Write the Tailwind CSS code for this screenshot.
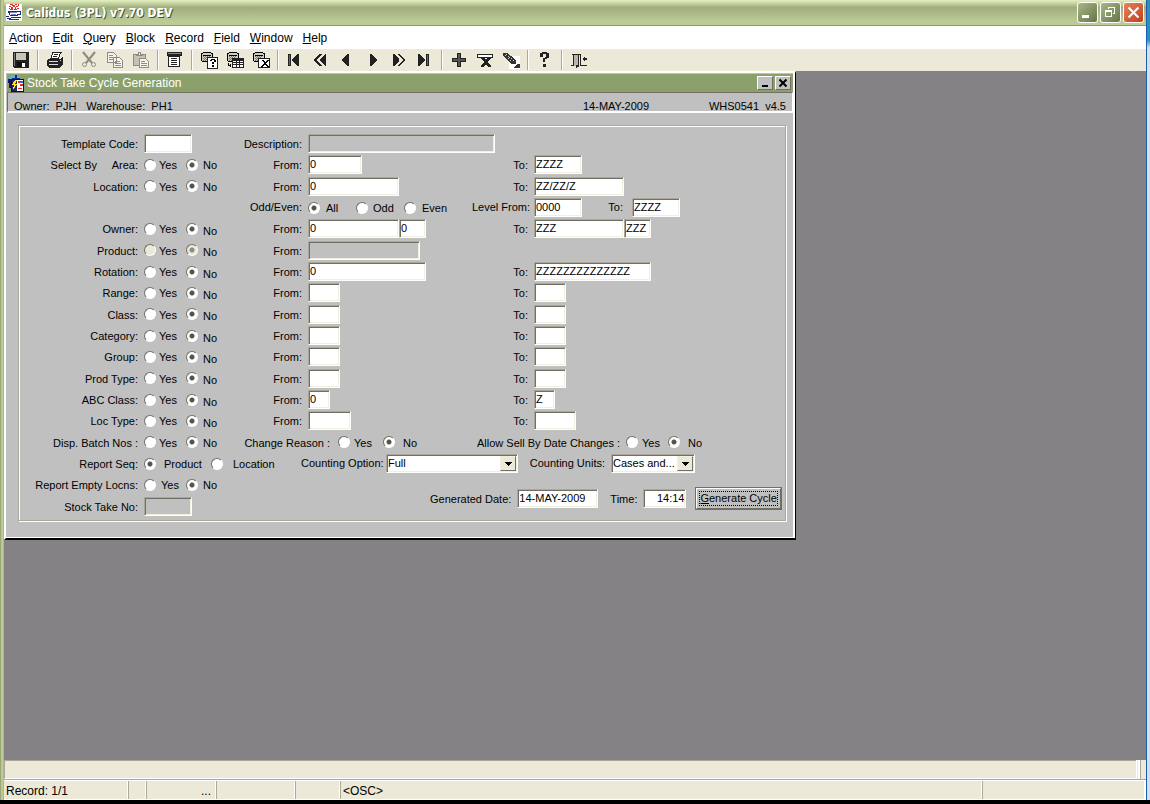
<!DOCTYPE html>
<html lang="en">
<head>
  <meta charset="UTF-8">
  <meta name="viewport" content="width=device-width, initial-scale=1.0">
  <script src="https://cdn.jsdelivr.net/npm/@tailwindcss/browser@4"></script>
  <title>Calidus (3PL) v7.70 DEV</title>
</head>
<body class="h-screen overflow-hidden flex flex-col bg-black font-['Liberation_Sans',Arial,sans-serif] text-xs text-black">

  <div class="flex flex-1 min-h-0">
    <!-- Left window edge -->
    <div class="w-1 bg-linear-to-r from-[#8b9a68] via-[#c9d5a4] to-[#a3ae80]"></div>

    <div class="flex flex-col flex-1 min-w-0">
      <!-- Title bar -->
      <header class="h-[26px] flex items-center justify-between pl-0.5 pr-0.5 bg-linear-to-b from-[#e4f0c0] from-0% via-[#a0ae7d] via-30% to-[#bccb96] to-85% border-b border-[#8a9a68]">
        <div class="flex items-center gap-1">
          <svg class="w-4 h-[17px]" viewBox="0 0 16 17" shape-rendering="crispEdges">
            <rect width="16" height="17" fill="#fff"/>
            <path d="M4 0h2v1h-2zM6 0h1v2h-1zM9 0h2v1h-2zM12 0h1v2h-1zM3 2h2v1h-2zM7 1h2v2h-2zM10 2h2v1h-2zM5 3h2v2h-2zM9 3h1v2h-1zM11 4h2v1h-2zM3 4h1v1h-1zM4 5h3v1h-3zM8 5h3v1h-3z" fill="#e22c2c"/>
            <path d="M2 7h10v1h-10zM2 8h2v1h-2zM11 7h4v1h-4zM14 8h1v3h-1zM3 9h1v2h-1zM11 10h3v1h-3zM4 11h8v1h-8zM0 12h3v1h-3zM5 13h6v1h-6zM1 14h4v1h-4zM11 13h4v1h-4zM3 15h10v1h-10z" fill="#22267c"/>
            <path d="M4 8h7v1h-7zM5 10h5v1h-5z" fill="#7d86c4"/>
          </svg>
          <h1 class="font-['DejaVu_Sans_Condensed','Open_Sans',sans-serif] text-xs font-bold text-white [text-shadow:1px_1px_0_#4a5632]">Calidus (3PL) v7.70 DEV</h1>
        </div>
        <div class="flex gap-0.5">
          <button type="button" aria-label="Minimize" class="size-[21px] rounded-[3px] border border-white bg-linear-to-br from-[#a9b787] to-[#66764a]">
            <svg viewBox="0 0 19 19" shape-rendering="crispEdges"><path d="M4 12h7v3h-7z" fill="#fff"/></svg>
          </button>
          <button type="button" aria-label="Restore" class="size-[21px] rounded-[3px] border border-white bg-linear-to-br from-[#a9b787] to-[#66764a]">
            <svg viewBox="0 0 19 19" shape-rendering="crispEdges" fill="none" stroke="#fff"><path d="M4.500 8.500h6v5h-6zM4 7.500h7M7.500 6v-1.500h6v6h-2M7 4.500h7"/></svg>
          </button>
          <button type="button" aria-label="Close" class="size-[21px] rounded-[3px] border border-white bg-linear-to-br from-[#e5835f] to-[#c23c10]">
            <svg viewBox="0 0 19 19" fill="none" stroke="#fff" stroke-width="2"><path d="M4.500 4.500l10 10M14.500 4.500l-10 10"/></svg>
          </button>
        </div>
      </header>

      <!-- Menu -->
      <nav class="h-[23px] flex items-center gap-2.5 px-[5px] bg-white">
        <a href="#"><u>A</u>ction</a>
        <a href="#"><u>E</u>dit</a>
        <a href="#"><u>Q</u>uery</a>
        <a href="#"><u>B</u>lock</a>
        <a href="#"><u>R</u>ecord</a>
        <a href="#"><u>F</u>ield</a>
        <a href="#"><u>W</u>indow</a>
        <a href="#"><u>H</u>elp</a>
      </nav>

      <!-- Toolbar, filled in below -->
      <div id="toolbar" class="h-[22px] flex items-start pl-1 bg-[#ece9d8]"></div>

      <!-- Workspace -->
      <main class="flex-1 min-h-0 bg-[#848284]">
        <section class="w-[792px] max-w-full border-t-2 border-l-2 border-white border-r border-r-black border-b-2 border-b-black bg-[#c0c0c0] text-[11px] leading-[13px]">
          <div class="border-r-2 border-b border-white pb-4">
            <div class="pt-px pl-px">
              <div class="h-[18px] flex items-center justify-between pr-0.5 bg-[#8ca06b] text-white">
                <div class="flex items-center gap-0.5 text-xs leading-4">
                  <svg class="size-[18px]" viewBox="0 0 18 18" shape-rendering="crispEdges">
                    <circle cx="8" cy="6" r="5" fill="#102c9c"/>
                    <path d="M4 1h4v3h-3v2h-2v-3zM10 2h3v2h-3z" fill="#5bb5c9"/>
                    <path d="M1 5h3v9h-2v-5h-1z" fill="#14146e"/>
                    <path d="M4 5h13v13h-13z" fill="#111"/>
                    <path d="M5 6h11v11h-11z" fill="#fff"/>
                    <path d="M5 6h5v11h-5z" fill="#2a2a58"/>
                    <path d="M8 6h2l-2 4h2l-4 6 1-5h-2z" fill="#ffe41c"/>
                    <path d="M11 7h2v2h-2zM13 10h3v2h-3zM11 14h4v1h-4z" fill="#e22"/>
                    <path d="M13 7h3v2h-3z" fill="#36c"/>
                  </svg>
                  <h2>Stock Take Cycle Generation</h2>
                </div>
                <div class="flex gap-0.5">
                  <button type="button" aria-label="Minimize form" class="w-4 h-[14px] bg-[#c0c0c0] border border-white border-r-[#716f64] border-b-[#716f64]">
                    <svg viewBox="0 0 14 12" shape-rendering="crispEdges"><path d="M4 8h6v2h-6z"/></svg>
                  </button>
                  <button type="button" aria-label="Close form" class="w-4 h-[14px] bg-[#c0c0c0] border border-white border-r-[#716f64] border-b-[#716f64]">
                    <svg viewBox="0 0 14 12" fill="none" stroke="#000" stroke-width="2"><path d="M3.500 2.500l7 7M10.500 2.500l-7 7"/></svg>
                  </button>
                </div>
              </div>
              <div class="h-[21px] flex items-end justify-between px-1.5 leading-[10px] border-t border-l border-[#716f64] border-r border-r-white border-b-2 border-b-white">
                <p class="flex-1 flex gap-2.5"><span>Owner:&nbsp; PJH</span><span>Warehouse:&nbsp; PH1</span></p>
                <p class="w-[203px] flex justify-between"><span>14-MAY-2009</span><span>WHS0541&nbsp; v4.5</span></p>
              </div>
            </div>

            <form class="mt-3 ml-3 mr-[7px] p-px border border-[#aca899] shadow-[inset_1px_1px_0_#fff,1px_1px_0_#fff]">
              <div id="rows" class="h-96 mt-1.5 mb-0.5 grid grid-rows-[repeat(16,minmax(0,1fr))_minmax(0,2fr)] whitespace-nowrap"></div>
            </form>
          </div>
        </section>
      </main>

      <!-- Status area -->
      <footer class="bg-[#ece9d8]">
        <div class="h-5 flex border-b border-[#aca899]">
          <div class="flex-1 border-t border-l border-[#aca899] border-b border-b-white"></div>
          <div class="w-1 border-l border-white border-r-2 border-r-white"></div>
          <div class="w-1.5 border-l border-[#aca899]"></div>
        </div>
        <div class="h-5 flex leading-[20px] border-t border-b border-white">
          <div class="w-[124px] pl-0.5 border-r border-white">Record: 1/1</div>
          <div class="w-[18px] border-l border-[#aca899] border-r border-r-white"></div>
          <div class="w-[70px] pr-1 text-right border-l border-[#aca899] border-r border-r-white">...</div>
          <div class="w-[79px] border-l border-[#aca899] border-r border-r-white"></div>
          <div class="w-[45px] border-l border-[#aca899] border-r border-r-white"></div>
          <div class="flex-1 pl-0.5 border-l border-[#aca899] border-r border-r-white">&lt;OSC&gt;</div>
          <div class="w-[164px] border-l border-[#aca899] border-r-2 border-r-white"></div>
        </div>
      </footer>
    </div>

    <!-- Desktop showing at the right -->
    <div class="w-1 border-l border-[#1c5fa8] bg-linear-to-b from-[#2c8cc8] from-5% via-[#d5dff2] via-6% to-[#d5dff2]"></div>
  </div>
  <div class="h-1"></div>

  <script>
    // Toolbar icons, all on a 16x16 grid
    const db = '<path d="M1 1h10v9h-10z" fill="#d0cec4"/><path d="M2 0h8v1h-8zM0 1h2v1h-2zM10 1h2v1h-2zM0 2h1v7h-1zM11 2h1v4h-1zM2 3h8v1h-8zM1 9h5v1h-5z"/><path d="M2 4h1v1h-1zM4 4h1v1h-1zM6 4h1v1h-1zM8 4h1v1h-1zM3 5h1v1h-1zM5 5h1v1h-1zM7 5h1v1h-1zM2 6h1v1h-1zM4 6h1v1h-1zM3 7h1v1h-1zM5 7h1v1h-1zM2 8h1v1h-1zM4 8h1v1h-1z" fill="#777"/>';
    const groups = [
      [['Save', '<path d="M0 0h16v16h-15l-1-1z" fill="#222"/><path d="M3 1h10v7h-10z" fill="#c8c6ba"/><path d="M4 10h8v5h-8z" fill="#111"/><path d="M9 11h3v4h-3z" fill="#fff"/><path d="M1 1h1v13h-1z" fill="#777"/>']],
      [['Print', '<path d="M5 0h10v1h-1l-2 6h-9l2-5z" fill="#222"/><path d="M6 1h7l-2 5h-6z" fill="#fff"/><path d="M7 2h4v1h-4zM6 4h4v1h-4z" fill="#222"/><path d="M1 7h12l2-2h1v7l-3 4h-11l-2-2v-5z" fill="#222"/><path d="M2 9h9v1h-9zM2 12h9v1h-9zM13 8l1-1v1l-1 1z" fill="#ddd"/>']],
      [
        ['Cut', '<g fill="none" stroke="#8d8b82" shape-rendering="auto"><path d="M2 0l9 11M14 0l-9 11" stroke-width="2"/><circle cx="3.500" cy="12.500" r="2"/><circle cx="12.500" cy="12.500" r="2"/></g>'],
        ['Copy', '<path d="M.5 .5h6l3 3v7h-9z M6.500 5.500h6l3 3v7h-9z" fill="#f4f3ec" stroke="#8d8b82"/><path d="M2 3h4v1h-4zM2 5h4v1h-4zM2 7h4v1h-4zM8 9h5v1h-5zM8 11h6v1h-6zM8 13h6v1h-6z" fill="#8d8b82"/>'],
        ['Paste', '<path d="M.5 2.500h12v11h-12z" fill="#c4c2b6" stroke="#8d8b82"/><path d="M3.500 3.500v-1h2v-2h2v2h2v1z" fill="#eee" stroke="#8d8b82"/><path d="M6.500 6.500h6l3 3v6h-9z" fill="#f4f3ec" stroke="#8d8b82"/><path d="M8 9h4v1h-4zM8 11h6v1h-6zM8 13h6v1h-6z" fill="#8d8b82"/>']
      ],
      [['List of values', '<path d="M0 0h15v4h-15z" fill="#222"/><path d="M1 1h13v1h-13z" fill="#888"/><path d="M1.500 4.500h11v10h-11z" fill="#fff" stroke="#222"/><path d="M4 6h6v1h-6zM4 8h6v1h-6zM4 10h6v1h-6zM4 12h6v1h-6z" fill="#222"/>']],
      [
        ['Enter query', db + '<path d="M6.500 5.500h10v11h-10z" fill="#fff" stroke="#222"/><path d="M9 8h1v-1h4v1h1v2h-2v2h-2v-2h2v-2h-2v1h-2zM11 13h2v2h-2z"/>'],
        ['Execute query', db + '<path d="M5 6h12v10h-12z" fill="#222"/><path d="M6 9h3v1h-3zM10 9h2v1h-2zM13 9h3v1h-3zM6 11h3v1h-3zM10 11h2v1h-2zM13 11h3v1h-3zM6 13h3v2h-3zM10 13h2v2h-2zM13 13h3v2h-3z" fill="#fff"/><path d="M1 11h1v2h1v-1h1v3h-1v-1h-2z"/>'],
        ['Cancel query', db + '<path d="M5.500 6.500h11v9h-11z" fill="#fff" stroke="#222"/><path d="M8 8h2l2 2 2-2h2l-3 3 3 4h-2l-2-3-2 3h-2l3-4z"/>']
      ],
      [
        ['First record', '<path d="M1 2h3v12h-3zM12 2v12h-1l-6-5v-2l6-5z" fill="#222"/><path d="M2 3h1v10h-1z" fill="#666"/>'],
        ['Previous set', '<path d="M13 2v12h-1l-5-5v-2l5-5zM7 2h2l-6 6 6 6h-2l-6-5v-2z" fill="#222"/>'],
        ['Previous record', '<path d="M10 2v12h-1l-6-5v-2l6-5z" fill="#222"/>'],
        ['Next record', '<path d="M5 2v12h1l6-5v-2l-6-5z" fill="#222"/>'],
        ['Next set', '<path d="M2 2v12h1l5-5v-2l-5-5zM8 2h-2l6 6-6 6h2l6-5v-2z" fill="#222"/>'],
        ['Last record', '<path d="M1 2v12h1l6-5v-2l-6-5zM9 2h3v12h-3z" fill="#222"/><path d="M10 3h1v10h-1z" fill="#666"/>']
      ],
      [
        ['Insert record', '<path d="M6 1h4v5h5v4h-5v5h-4v-5h-5v-4h5z" fill="#222"/><path d="M7 2h2v5h5v2h-5v5h-2v-5h-5v-2h5z" fill="#555"/>'],
        ['Remove record', '<path d="M.5 2.500h15v3h-15z" fill="#fff" stroke="#222"/><path d="M4 5h3l2 3 2-3h3v1l-3 4 3 4v1h-3l-2-3-2 3h-3v-1l3-4-3-4z" fill="#222"/>'],
        ['Clear record', '<path d="M6 4h11v13h-11z" fill="#fff"/><path d="M17 12v4h-6v-1l4-3z" fill="#333"/><path d="M0 1h4l9 7v4h-4l-9-8z" fill="#333"/><path d="M2 3h1v1h-1zM3 2h1v1h-1zM5 4h1v1h-1zM6 5h1v1h-1zM5 6h1v1h-1zM8 6h1v1h-1zM7 8h1v1h-1zM10 8h1v1h-1z" fill="#ccc"/>']
      ],
      [['Help', '<path d="M3 1h2v-1h5v1h2v5h-2v1h-2v3h-2v-4h2v-1h1v-3h-3v3h-3zM6 12h3v3h-3z" fill="#222"/>']],
      [['Exit', '<path d="M1 2h9v1h-9zM2 2h1v11h-1zM9 2h1v11h-1zM0 13h4v1h-4zM9 13h7v1h-7z" fill="#222"/><path d="M3 3h5v11h-5z" fill="#b8b6aa"/><path d="M7 3h1v12h-2v1h-1v-3h2zM11 7l3-3v2h2v2h-2v2z" fill="#222"/>']]
    ];
    document.getElementById('toolbar').innerHTML = groups.map(icons => icons.map(([name, art]) =>
      `<button type="button" title="${name}" aria-label="${name}" class="w-[26px] h-[21px] flex items-center justify-center"><svg class="size-4 overflow-visible" viewBox="0 0 16 16" shape-rendering="crispEdges">${art}</svg></button>`
    ).join('')).join('<span class="w-0.5 h-5 mt-px mx-[3px] border-l border-[#aca899] border-r border-r-white"></span>');

    // Form building
    let nextId = 0;

    function textField(id, width, value = '', disabled = false) {
      return `<input type="text" id="${id}" value="${value}" style="width:${width}px" ${disabled ? 'disabled' : ''} class="shrink-0 h-[19px] px-px pb-px bg-white disabled:bg-[#c0c0c0] border border-[#aca899] border-r-white border-b-white shadow-[inset_1px_1px_0_#716f64,inset_-1px_-1px_0_#f1efe2] outline-none">`;
    }

    // boxes is a list of [width, value, disabled]
    function labelled(text, boxes) {
      const ids = boxes.map(() => 'f' + nextId++);
      return `<label for="${ids[0]}" class="text-right pt-0.5">${text}</label>
        <div class="flex">${boxes.map(([w, v, off], i) => textField(ids[i], w, v, off)).join('')}</div>`;
    }

    // options is a list of [text, checked, width, label classes]
    function radios(name, options, disabled = false) {
      return `<div role="radiogroup" aria-label="${name}" class="flex items-center">${options.map(([text, on, width, cls]) => `
        <label class="flex items-center ${cls}" style="width:${width}px">
          <input type="radio" name="${name}" ${on ? 'checked' : ''} ${disabled ? 'disabled' : ''} class="appearance-none shrink-0 size-3 rounded-full bg-white checked:bg-[radial-gradient(circle,#55534a_2px,#fff_3px)] disabled:bg-[#ece9d8] disabled:checked:bg-[radial-gradient(circle,#8d8b82_2px,#ece9d8_3px)] border border-[#716f64] border-r-white border-b-white">
          <span class="${text === 'No' && cls.includes('low') ? 'pt-[5px]' : 'pt-0.5'}">${text}</span>
        </label>`).join('')}</div>`;
    }

    function dropdown(text, width, value, labelClass) {
      const id = 'f' + nextId++;
      return `<label for="${id}" class="${labelClass}">${text}</label>
        <div class="relative" style="width:${width}px">
          <select id="${id}" class="appearance-none block w-full h-[19px] pl-px bg-white border border-[#aca899] border-r-white border-b-white shadow-[inset_1px_1px_0_#716f64,inset_-1px_-1px_0_#f1efe2] outline-none"><option>${value}</option></select>
          <span class="absolute right-0.5 top-0.5 w-4 h-[15px] flex items-center justify-center bg-[#ece9d8] border border-[#f1efe2] border-r-[#716f64] border-b-[#716f64] pointer-events-none">
            <svg class="w-[7px] h-1" viewBox="0 0 7 4" shape-rendering="crispEdges"><path d="M0 0h7v1h-1v1h-1v1h-1v1h-1v-1h-1v-1h-1v-1h-1z"/></svg>
          </span>
        </div>`;
    }

    const row = 'grid grid-cols-[118px_90px_62px_158px_56px_1fr] gap-x-1.5 items-center';
    const yesNo = (name, low, off) => radios(name, [['Yes', false, 42, 'gap-[3px]'], ['No', true, 40, low ? 'gap-[5px] low' : 'gap-[5px]']], off);
    const label = text => `<span class="text-right pt-0.5">${text}</span>`;

    const ranges = [
      ['Owner:', [[91, '0'], [27, '0']], [[90, 'ZZZ'], [27, 'ZZZ']]],
      ['Product:', [[112, '', true]], null],
      ['Rotation:', [[118, '0']], [[117, 'ZZZZZZZZZZZZZZ']]],
      ['Range:', [[32]], [[32]]],
      ['Class:', [[32]], [[32]]],
      ['Category:', [[32]], [[32]]],
      ['Group:', [[32]], [[32]]],
      ['Prod Type:', [[32]], [[32]]],
      ['ABC Class:', [[22, '0']], [[21, 'Z']]],
      ['Loc Type:', [[43]], [[42]]]
    ];

    let html = `
      <div class="${row}">${labelled('Template Code:', [[48]])}${labelled('Description:', [[187, '', true]])}</div>
      <div class="${row}">${label('Select By &nbsp; &nbsp; Area:')}${yesNo('Area')}${labelled('From:', [[54, '0']])}${labelled('To:', [[48, 'ZZZZ']])}</div>
      <div class="${row}">${label('Location:')}${yesNo('Location')}${labelled('From:', [[91, '0']])}${labelled('To:', [[90, 'ZZ/ZZ/Z']])}</div>
      <div class="${row}">
        <span class="col-start-3 text-right">Odd/Even:</span>
        ${radios('Odd/Even', [['All', true, 48, 'gap-1.5'], ['Odd', false, 48, 'gap-[5px]'], ['Even', false, 48, 'gap-1.5']])}
        <label for="levelFrom" class="text-right">Level From:</label>
        <div class="flex items-center">
          ${textField('levelFrom', 48, '0000')}
          <label for="levelTo" class="w-[41px] text-right mr-[9px]">To:</label>
          ${textField('levelTo', 48, 'ZZZZ')}
        </div>
      </div>`;

    ranges.forEach(([name, from, to]) => {
      const off = name === 'Product:';
      html += `<div class="${row}">${label(name)}${yesNo(name, true, off)}${labelled('From:', from)}${to ? labelled('To:', to) : ''}</div>`;
    });

    html += `
      <div class="${row}">
        ${label('Disp. Batch Nos :')}${yesNo('Disp. Batch Nos')}
        <div class="col-span-4 flex items-center">
          <span class="w-[90px] text-right pt-0.5 mr-2">Change Reason :</span>
          ${radios('Change Reason', [['Yes', false, 45, 'gap-1'], ['No', true, 94, 'gap-2']])}
          <span class="w-[141px] text-right pt-0.5 mr-2">Allow Sell By Date Changes :</span>
          ${radios('Allow Sell By Date Changes', [['Yes', false, 42, 'gap-1'], ['No', true, 40, 'gap-2']])}
        </div>
      </div>
      <div class="${row}">
        ${label('Report Seq:')}
        <div class="col-span-5 flex items-center">
          ${radios('Report Seq', [['Product', true, 67, 'gap-2'], ['Location', false, 90, 'gap-2.5']])}
          ${dropdown('Counting Option:', 132, 'Full', 'w-[79px] text-right mr-1.5')}
          ${dropdown('Counting Units:', 84, 'Cases and...', 'w-[87px] text-right mr-1.5')}
        </div>
      </div>
      <div class="flex items-center">
        <div class="w-[410px] h-full grid grid-rows-2 grid-cols-[118px_1fr] gap-x-1.5 items-center">
          ${label('Report Empty Locns:')}${radios('Report Empty Locns', [['Yes', false, 42, 'gap-[5px]'], ['No', true, 40, 'gap-[5px]']])}
          ${labelled('Stock Take No:', [[48, '', true]])}
        </div>
        <div class="flex items-center gap-1.5 pt-1.5">
          ${labelled('Generated Date:', [[81, '14-MAY-2009']])}
          <label for="time" class="pl-1.5 pt-0.5">Time:</label>
          ${textField('time', 43, '14:14').replace('class="', 'class="text-right ')}
          <button type="button" class="ml-1 p-0.5 border border-white border-r-[#716f64] border-b-[#716f64] outline outline-[#716f64] bg-[#c0c0c0]"><span class="block border border-dotted border-black"><u>G</u>enerate Cycle</span></button>
        </div>
      </div>`;

    document.getElementById('rows').innerHTML = html;
  </script>
</body>
</html>
